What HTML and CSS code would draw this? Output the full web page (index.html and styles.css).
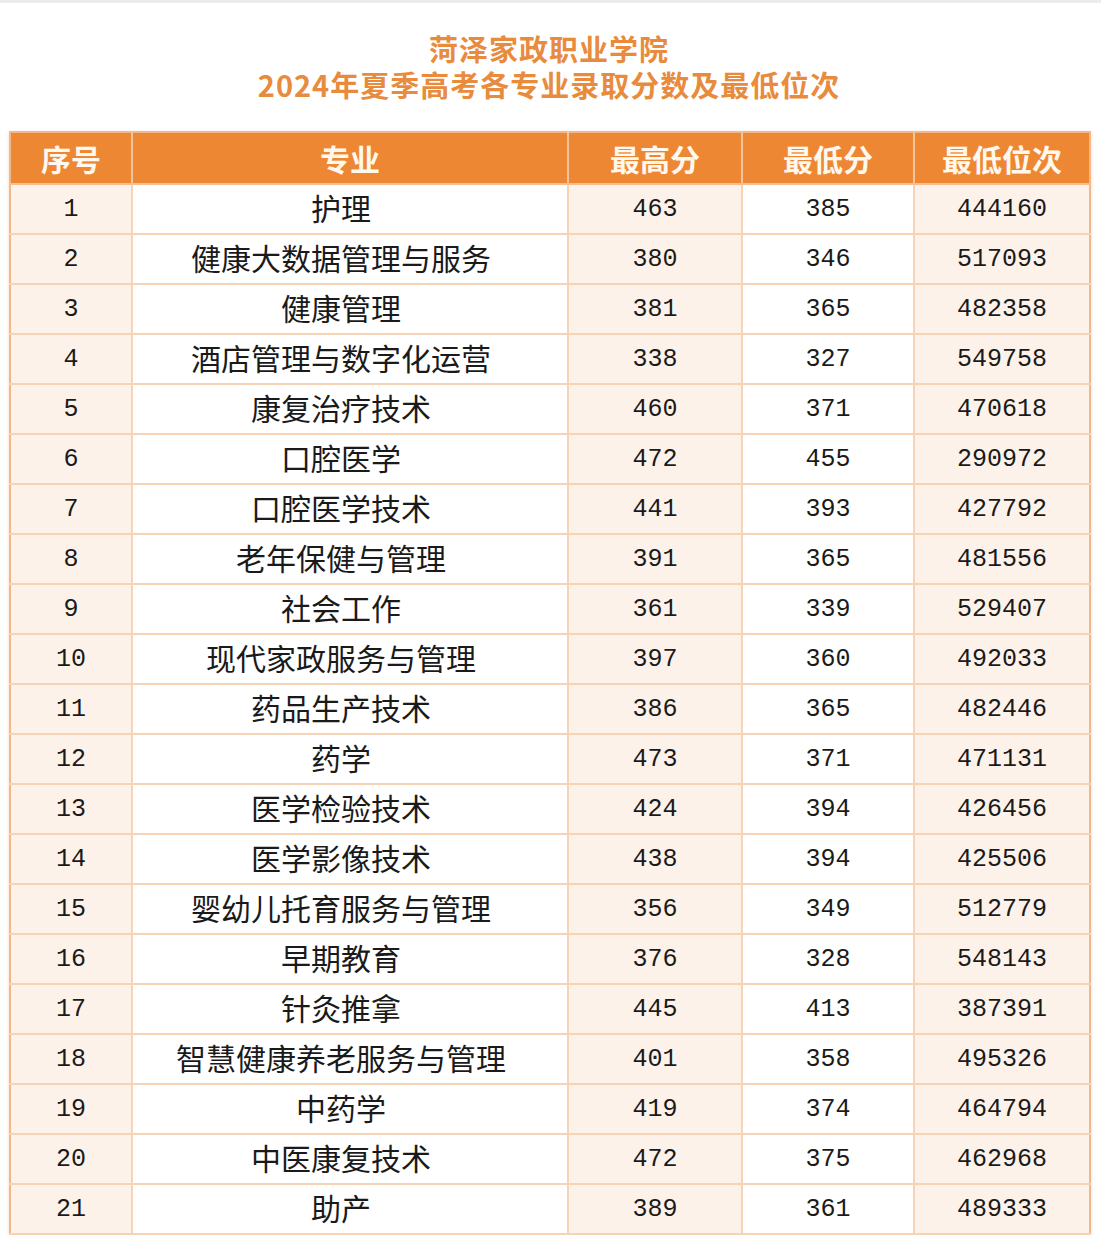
FILE: index.html
```html
<!DOCTYPE html>
<html lang="zh-CN">
<head>
<meta charset="utf-8">
<title>菏泽家政职业学院 2024年夏季高考各专业录取分数及最低位次</title>
<link rel="stylesheet" href="styles.css">
</head>
<body>
<div class="page">
  <h1 class="title">
    <span class="title-line">菏泽家政职业学院</span>
    <span class="title-line">2024年夏季高考各专业录取分数及最低位次</span>
  </h1>
  <table class="scores">
    <colgroup>
      <col class="c-no"><col class="c-major"><col class="c-max"><col class="c-min"><col class="c-rank">
    </colgroup>
    <thead>
      <tr><th>序号</th><th>专业</th><th>最高分</th><th>最低分</th><th>最低位次</th></tr>
    </thead>
    <tbody>
      <tr><td>1</td><td>护理</td><td>463</td><td>385</td><td>444160</td></tr>
      <tr><td>2</td><td>健康大数据管理与服务</td><td>380</td><td>346</td><td>517093</td></tr>
      <tr><td>3</td><td>健康管理</td><td>381</td><td>365</td><td>482358</td></tr>
      <tr><td>4</td><td>酒店管理与数字化运营</td><td>338</td><td>327</td><td>549758</td></tr>
      <tr><td>5</td><td>康复治疗技术</td><td>460</td><td>371</td><td>470618</td></tr>
      <tr><td>6</td><td>口腔医学</td><td>472</td><td>455</td><td>290972</td></tr>
      <tr><td>7</td><td>口腔医学技术</td><td>441</td><td>393</td><td>427792</td></tr>
      <tr><td>8</td><td>老年保健与管理</td><td>391</td><td>365</td><td>481556</td></tr>
      <tr><td>9</td><td>社会工作</td><td>361</td><td>339</td><td>529407</td></tr>
      <tr><td>10</td><td>现代家政服务与管理</td><td>397</td><td>360</td><td>492033</td></tr>
      <tr><td>11</td><td>药品生产技术</td><td>386</td><td>365</td><td>482446</td></tr>
      <tr><td>12</td><td>药学</td><td>473</td><td>371</td><td>471131</td></tr>
      <tr><td>13</td><td>医学检验技术</td><td>424</td><td>394</td><td>426456</td></tr>
      <tr><td>14</td><td>医学影像技术</td><td>438</td><td>394</td><td>425506</td></tr>
      <tr><td>15</td><td>婴幼儿托育服务与管理</td><td>356</td><td>349</td><td>512779</td></tr>
      <tr><td>16</td><td>早期教育</td><td>376</td><td>328</td><td>548143</td></tr>
      <tr><td>17</td><td>针灸推拿</td><td>445</td><td>413</td><td>387391</td></tr>
      <tr><td>18</td><td>智慧健康养老服务与管理</td><td>401</td><td>358</td><td>495326</td></tr>
      <tr><td>19</td><td>中药学</td><td>419</td><td>374</td><td>464794</td></tr>
      <tr><td>20</td><td>中医康复技术</td><td>472</td><td>375</td><td>462968</td></tr>
      <tr><td>21</td><td>助产</td><td>389</td><td>361</td><td>489333</td></tr>
    </tbody>
  </table>
</div>
</body>
</html>
```

FILE: styles.css
```css
html, body {
  margin: 0;
  padding: 0;
  background: #ffffff;
}

body {
  border-top: 3px solid #ececec;
  font-family: "Noto Sans CJK SC", "Noto Sans", sans-serif;
  color: #1a1a1a;
}

.page {
  padding: 27px 12px 0 9px;
}

.title {
  margin: 0;
  display: flex;
  flex-direction: column;
  align-items: center;
  gap: 0;
  color: #e98b3d;
  font-size: 29px;
  font-weight: 700;
  letter-spacing: 1px;
}

.title-line {
  display: block;
  line-height: 36px;
  height: 36px;
}

.scores {
  margin-top: 29px;
  width: 1080px;
  border-collapse: collapse;
  table-layout: fixed;
  border: 2px solid #f0b98d;
  box-shadow: 0 1px 3px rgba(230, 150, 90, 0.35);
}

.c-no { width: 122px; }
.c-major { width: 436px; }
.c-max { width: 174px; }
.c-min { width: 172px; }
.c-rank { width: 176px; }

.scores th {
  height: 50px;
  padding: 0;
  background: #ee8733;
  color: #fff8ef;
  font-size: 30px;
  font-weight: 700;
  text-align: center;
  vertical-align: middle;
  border-left: 2px solid #f5c49b;
  border-bottom: 2px solid #f3bf93;
}

.scores th:first-child {
  border-left: none;
}

.scores td {
  height: 48px;
  padding: 0;
  text-align: center;
  vertical-align: middle;
  font-size: 30px;
  font-weight: 400;
  line-height: 1;
  border-left: 2px solid #f6d3b5;
  border-bottom: 2px solid #f6d3b5;
  background: #ffffff;
}

.scores td:nth-child(2) {
  height: 44px;
  padding: 0 18px 4px 0;
}

.scores td:first-child {
  border-left: none;
}

.scores td:nth-child(1),
.scores td:nth-child(3),
.scores td:nth-child(5) {
  background: #fdf2ea;
}

.scores td:nth-child(n+3),
.scores td:first-child {
  font-family: "Liberation Mono", "DejaVu Sans Mono", monospace;
  font-size: 25px;
}
```
